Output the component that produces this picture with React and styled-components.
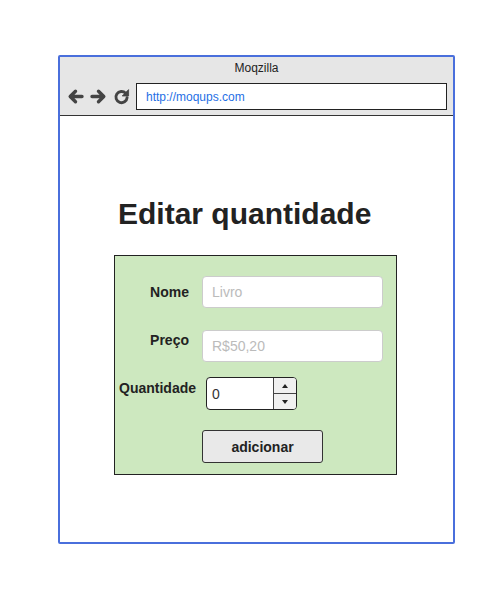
import React from "react";
import styled, { createGlobalStyle } from "styled-components";

const Global = createGlobalStyle`
  html, body { margin: 0; padding: 0; background: #ffffff; }
  body { font-family: "Liberation Sans", Arial, sans-serif; }
  * { box-sizing: border-box; }
`;

const Page = styled.div`
  padding: 55px 0 0 58px;
`;

const Window = styled.div`
  width: 397px;
  height: 489px;
  border: 2px solid #4a6fdc;
  border-radius: 2px;
  display: flex;
  flex-direction: column;
  background: #ffffff;
`;

const Header = styled.div`
  background: #e6e6e6;
  border-bottom: 1px solid #333333;
  padding: 3px 0 5px;
  display: flex;
  flex-direction: column;
`;

const WindowTitle = styled.div`
  font-size: 12px;
  line-height: 16px;
  color: #222222;
  text-align: center;
  margin-bottom: 7px;
`;

const Toolbar = styled.div`
  display: flex;
  align-items: center;
  padding: 0 6px 0 7px;
  gap: 6px;
`;

const NavIcon = styled.svg`
  display: block;
  width: 17px;
  height: 17px;
  color: #444444;
  flex-shrink: 0;
`;

const UrlBox = styled.div`
  flex: 1;
  height: 27px;
  border: 1px solid #222222;
  background: #ffffff;
  display: flex;
  align-items: center;
  padding-left: 9px;
  font-size: 12px;
  color: #1f6fe5;
`;

const Content = styled.div`
  display: flex;
  flex-direction: column;
  padding: 81px 0 0 54px;
`;

const Heading = styled.h1`
  margin: 0 0 24px 4px;
  font-size: 30px;
  line-height: 34px;
  font-weight: bold;
  color: #222222;
`;

const Panel = styled.div`
  width: 283px;
  height: 220px;
  border: 1px solid #222222;
  background: #cde8bf;
  padding-top: 20px;
  display: flex;
  flex-direction: column;
`;

const Row = styled.div`
  display: flex;
  align-items: ${(p) => p.$align || "center"};
  padding-left: ${(p) => p.$indent || 0}px;
  gap: ${(p) => p.$gap || 13}px;
  margin-bottom: ${(p) => p.$after || 0}px;
`;

const Label = styled.label`
  width: ${(p) => (p.$width ? `${p.$width}px` : "auto")};
  text-align: right;
  font-size: 14px;
  line-height: 16px;
  font-weight: bold;
  color: #222222;
  padding-top: ${(p) => p.$top || 0}px;
  flex-shrink: 0;
`;

const TextInput = styled.input`
  width: 181px;
  height: 32px;
  border: 1px solid #cccccc;
  border-radius: 4px;
  background: #ffffff;
  padding: 0 9px;
  font-family: "Liberation Sans", Arial, sans-serif;
  font-size: 14px;
  color: #333333;
  outline: none;
  &::placeholder { color: #bbbbbb; }
`;

const Stepper = styled.div`
  width: 91px;
  height: 33px;
  border: 1px solid #222222;
  border-radius: 4px;
  background: #ffffff;
  display: flex;
  overflow: hidden;
`;

const StepValue = styled.div`
  flex: 1;
  display: flex;
  align-items: center;
  padding-left: 5px;
  font-size: 14px;
  color: #333333;
`;

const SpinColumn = styled.div`
  width: 23px;
  border-left: 1px solid #444444;
  display: flex;
  flex-direction: column;
  background: #f0f0f0;
`;

const SpinButton = styled.div`
  flex: 1;
  display: flex;
  align-items: center;
  justify-content: center;
  & + & { border-top: 1px solid #444444; }
`;

const Triangle = styled.span`
  width: 0;
  height: 0;
  border-left: 3.5px solid transparent;
  border-right: 3.5px solid transparent;
  ${(p) =>
    p.$down
      ? "border-top: 4px solid #222222;"
      : "border-bottom: 4px solid #222222;"}
`;

const SubmitButton = styled.button`
  margin-left: 87px;
  width: 121px;
  height: 33px;
  border: 1px solid #333333;
  border-radius: 3px;
  background: #e9e9e9;
  font-family: "Liberation Sans", Arial, sans-serif;
  font-size: 14px;
  font-weight: bold;
  color: #222222;
  padding: 0;
`;

const ArrowIcon = ({ flip }) => (
  <NavIcon viewBox="0 0 17 17" style={flip ? { transform: "scaleX(-1)" } : undefined}>
    <path
      d="M15 8.5H3.5 M8.5 3.2L3.2 8.5l5.3 5.3"
      fill="none"
      stroke="currentColor"
      strokeWidth="3.4"
      strokeLinecap="round"
      strokeLinejoin="round"
    />
  </NavIcon>
);

const RefreshIcon = () => (
  <NavIcon viewBox="0 0 17 17">
    <path
      d="M12.6 5.2A5.6 5.6 0 1 0 14.1 9.6"
      fill="none"
      stroke="currentColor"
      strokeWidth="2.9"
      strokeLinecap="round"
    />
    <path d="M15.6 1.6V8H9.2Z" fill="currentColor" stroke="currentColor" strokeWidth="0.8" strokeLinejoin="round" />
  </NavIcon>
);

export default function App() {
  return (
    <>
      <Global />
      <Page>
        <Window>
          <Header>
            <WindowTitle>Moqzilla</WindowTitle>
            <Toolbar>
              <ArrowIcon />
              <ArrowIcon flip />
              <RefreshIcon />
              <UrlBox>http://moqups.com</UrlBox>
            </Toolbar>
          </Header>
          <Content>
            <Heading>Editar quantidade</Heading>
            <Panel>
              <Row $after={22}>
                <Label $width={74}>Nome</Label>
                <TextInput placeholder="Livro" />
              </Row>
              <Row $after={15} $align="flex-start">
                <Label $width={74} $top={2}>Preço</Label>
                <TextInput placeholder="R$50,20" />
              </Row>
              <Row $after={20} $align="flex-start" $indent={4} $gap={10}>
                <Label $top={3}>Quantidade</Label>
                <Stepper>
                  <StepValue>0</StepValue>
                  <SpinColumn>
                    <SpinButton><Triangle /></SpinButton>
                    <SpinButton><Triangle $down /></SpinButton>
                  </SpinColumn>
                </Stepper>
              </Row>
              <SubmitButton>adicionar</SubmitButton>
            </Panel>
          </Content>
        </Window>
      </Page>
    </>
  );
}
